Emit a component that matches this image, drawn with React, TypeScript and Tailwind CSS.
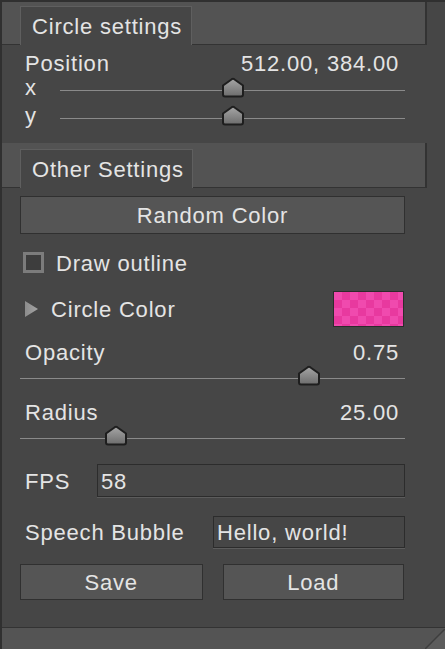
import React from 'react';

const Thumb: React.FC = () => (
  <svg width="24" height="21" viewBox="0 0 24 21">
    <defs>
      <linearGradient id="thumbFill" x1="0" y1="0" x2="0" y2="1">
        <stop offset="0" stopColor="#a6a6a6" />
        <stop offset="1" stopColor="#6c6c6c" />
      </linearGradient>
    </defs>
    <path
      d="M2 8.5 L10.8 2.2 Q12 1.4 13.2 2.2 L22 8.5 V17.5 Q22 19.5 20 19.5 H4 Q2 19.5 2 17.5 Z"
      fill="url(#thumbFill)"
      stroke="#1e1e1e"
      strokeWidth="2"
      strokeLinejoin="round"
    />
  </svg>
);

const Slider: React.FC<{ value: number; min: number; max: number }> = ({ value, min, max }) => {
  const frac = (value - min) / (max - min);
  return (
    <div className="relative h-[28px] flex-1">
      <div className="mt-[14px] h-px bg-[#8a8a8a]" />
      <div className="absolute top-px" style={{ left: `calc(${frac * 100}% - 12px)` }}>
        <Thumb />
      </div>
    </div>
  );
};

const SectionHeader: React.FC<{ title: string; height: string; tabWidth: string }> = ({ title, height, tabWidth }) => (
  <div className={`${height} w-[425px] bg-[#535353] border-b border-r-2 border-[#333333] flex items-end pl-[18px]`}>
    <div className={`${tabWidth} h-[39px] -mb-px bg-[#464646] border border-b-0 border-[#5f5f5f] pl-[11px] pt-[2px] flex items-center`}>
      {title}
    </div>
  </div>
);

const Field: React.FC<{ text: string; className: string }> = ({ text, className }) => (
  <div className={`${className} border border-[#2c2c2c] shadow-[0_1px_0_#5c5c5c] bg-[#464646] pl-[3px] pt-[2px] flex items-center`}>
    {text}
  </div>
);

const Button: React.FC<{ label: string; className?: string }> = ({ label, className = '' }) => (
  <div className={`${className} bg-[#555555] border border-[#303030] pt-[2px] flex items-center justify-center`}>{label}</div>
);

export default function App() {
  return (
    <div className="relative w-[445px] h-[649px] bg-[#464646] border-t-2 border-l-2 border-[#303030] flex flex-col font-['Liberation_Sans',Arial,sans-serif] text-[22px] leading-6 tracking-[0.8px] text-[#e4e4e4] overflow-hidden">
      <SectionHeader title="Circle settings" height="h-[43px]" tabWidth="w-[172px]" />

      <div className="pl-[18px] pr-[40px] pt-[7px] pb-[11px] flex flex-col">
        <div className="flex justify-between pl-[5px] pr-[6px] h-[24px] -mb-px">
          <span>Position</span>
          <span>512.00, 384.00</span>
        </div>
        <div className="flex mt-px">
          <span className="w-[40px] pl-[5px]">x</span>
          <Slider value={512} min={0} max={1024} />
        </div>
        <div className="flex">
          <span className="w-[40px] pl-[5px]">y</span>
          <Slider value={384} min={0} max={768} />
        </div>
      </div>

      <SectionHeader title="Other Settings" height="h-[45px]" tabWidth="w-[173px]" />

      <div className="pl-[18px] pr-[40px] flex flex-col">
        <Button label="Random Color" className="mt-[8px] h-[38px]" />

        <div className="mt-[18px] h-[21px] flex items-center">
          <div className="ml-[3px] w-[21px] h-[21px] border-[3px] border-[#7c7c7c] bg-[#3d3d3d]" />
          <span className="ml-[12px] pt-[3px]">Draw outline</span>
        </div>

        <div className="mt-[18px] h-[36px] flex items-center">
          <svg width="14" height="16" viewBox="0 0 14 16" className="ml-[5px]">
            <defs>
              <linearGradient id="triFill" x1="0" y1="0" x2="1" y2="0">
                <stop offset="0" stopColor="#8c8c8c" />
                <stop offset="1" stopColor="#a4a4a4" />
              </linearGradient>
            </defs>
            <polygon points="0,0 13,8 0,16" fill="url(#triFill)" />
          </svg>
          <span className="ml-[12px] pt-[2px]">Circle Color</span>
          <div className="ml-auto mr-px w-[71px] h-[36px] border border-[#2c2c2c] bg-[repeating-conic-gradient(#e8399f_0_25%,#f04aae_0_50%)] bg-[length:16px_16px]" />
        </div>

        <div className="mt-[14px] flex justify-between pl-[5px] pr-[6px] h-[24px] -mb-px">
          <span>Opacity</span>
          <span>0.75</span>
        </div>
        <div className="flex">
          <Slider value={0.75} min={0} max={1} />
        </div>

        <div className="mt-[9px] flex justify-between pl-[5px] pr-[6px] h-[24px] -mb-px">
          <span>Radius</span>
          <span>25.00</span>
        </div>
        <div className="flex">
          <Slider value={25} min={0} max={100} />
        </div>

        <div className="mt-[12px] flex items-center">
          <span className="w-[77px] pl-[5px] pt-[2px]">FPS</span>
          <Field text="58" className="flex-1 h-[33px]" />
        </div>

        <div className="mt-[19px] flex items-center">
          <span className="w-[193px] pl-[5px] pt-[2px]">Speech Bubble</span>
          <Field text="Hello, world!" className="flex-1 h-[32px]" />
        </div>

        <div className="mt-[16px] grid grid-cols-2 gap-[20px]">
          <Button label="Save" className="h-[36px]" />
          <Button label="Load" className="h-[36px] mr-px" />
        </div>
      </div>

      <div className="mt-auto h-[22px] border-t border-[#333333] bg-[#545454]" />

      <svg width="20" height="20" viewBox="0 0 20 20" className="absolute right-0 bottom-0">
        <polygon points="20,0 20,20 0,20" fill="#5c5c5c" />
        <line x1="20" y1="0" x2="0" y2="20" stroke="#3e3e3e" strokeWidth="1.5" />
      </svg>
    </div>
  );
}
